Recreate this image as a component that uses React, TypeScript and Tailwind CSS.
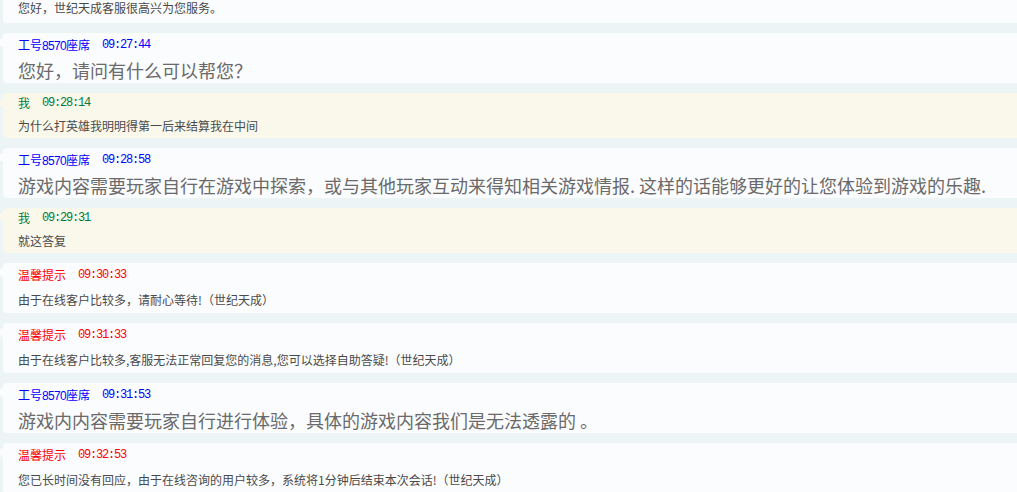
import React from "react";

type Kind = "agent" | "me" | "tip";

interface Msg {
  kind: Kind;
  name: string;
  time: string;
  text: string;
  big?: boolean;
}

const msgs: Msg[] = [
  { kind: "agent", name: "工号8570座席", time: "09:27:44", text: "您好，请问有什么可以帮您？", big: true },
  { kind: "me", name: "我", time: "09:28:14", text: "为什么打英雄我明明得第一后来结算我在中间" },
  {
    kind: "agent",
    name: "工号8570座席",
    time: "09:28:58",
    text: "游戏内容需要玩家自行在游戏中探索，或与其他玩家互动来得知相关游戏情报. 这样的话能够更好的让您体验到游戏的乐趣.",
    big: true,
  },
  { kind: "me", name: "我", time: "09:29:31", text: "就这答复" },
  { kind: "tip", name: "温馨提示", time: "09:30:33", text: "由于在线客户比较多，请耐心等待!（世纪天成）" },
  {
    kind: "tip",
    name: "温馨提示",
    time: "09:31:33",
    text: "由于在线客户比较多,客服无法正常回复您的消息,您可以选择自助答疑!（世纪天成）",
  },
  {
    kind: "agent",
    name: "工号8570座席",
    time: "09:31:53",
    text: "游戏内内容需要玩家自行进行体验，具体的游戏内容我们是无法透露的 。",
    big: true,
  },
  {
    kind: "tip",
    name: "温馨提示",
    time: "09:32:53",
    text: "您已长时间没有回应，由于在线咨询的用户较多，系统将1分钟后结束本次会话!（世纪天成）",
  },
];

const font = { fontFamily: '"Noto Sans CJK SC", "Liberation Sans", sans-serif' };

function Name({ name }: { name: string }) {
  const m = name.match(/^(\D*)(\d+)(\D*)$/);
  if (!m) return <span>{name}</span>;
  return (
    <span>
      {m[1]}
      <span className="tracking-[-0.67px]" style={{ fontFamily: '"Liberation Sans", sans-serif' }}>
        {m[2]}
      </span>
      {m[3]}
    </span>
  );
}

function Card({ m }: { m: Msg }) {
  const isMe = m.kind === "me";
  const bg = isMe ? "bg-[#faf8ea]" : "bg-[#fbfcfe]";
  const nameColor =
    m.kind === "me" ? "text-[#007a3a]" : m.kind === "tip" ? "text-[#ff0000]" : "text-[#0000ff]";
  return (
    <div className={`relative ${bg} rounded-l-[4px] pl-[15px] ${isMe ? "h-[45px]" : "h-[50px]"}`}>
      <div className={`absolute left-[-3px] top-[5px] w-[3px] h-[9px] rounded-l-full ${bg}`} />
      <div
        className={`flex items-center text-[12px] leading-none ${nameColor} ${isMe ? "h-[20px]" : "h-[24px]"}`}
      >
        <Name name={m.name} />
        <span
          className="ml-[12px] tracking-[-1.2px]"
          style={{ fontFamily: '"Liberation Mono", monospace' }}
        >
          {m.time}
        </span>
      </div>
      <div
        className={`flex items-center whitespace-nowrap leading-none ${isMe ? "h-[25px]" : "h-[26px]"} ${
          m.big ? "text-[18px] text-[#6a6a6a]" : "text-[12px] text-[#4a4a4a]"
        }`}
      >
        {m.text}
      </div>
    </div>
  );
}

export default function App() {
  return (
    <div className="h-[492px] w-[1017px] overflow-hidden bg-[#edf4f5]" style={font}>
      <div className="flex flex-col gap-[10px] pl-[3px] mt-[-27px]">
        <div className="relative bg-[#fbfcfe] rounded-l-[4px] pl-[15px] h-[50px]">
          <div className="h-[24px]" />
          <div className="flex items-center h-[22px] text-[12px] leading-none text-[#4a4a4a]">
            您好，世纪天成客服很高兴为您服务。
          </div>
        </div>
        {msgs.map((m, i) => (
          <Card key={i} m={m} />
        ))}
      </div>
    </div>
  );
}
